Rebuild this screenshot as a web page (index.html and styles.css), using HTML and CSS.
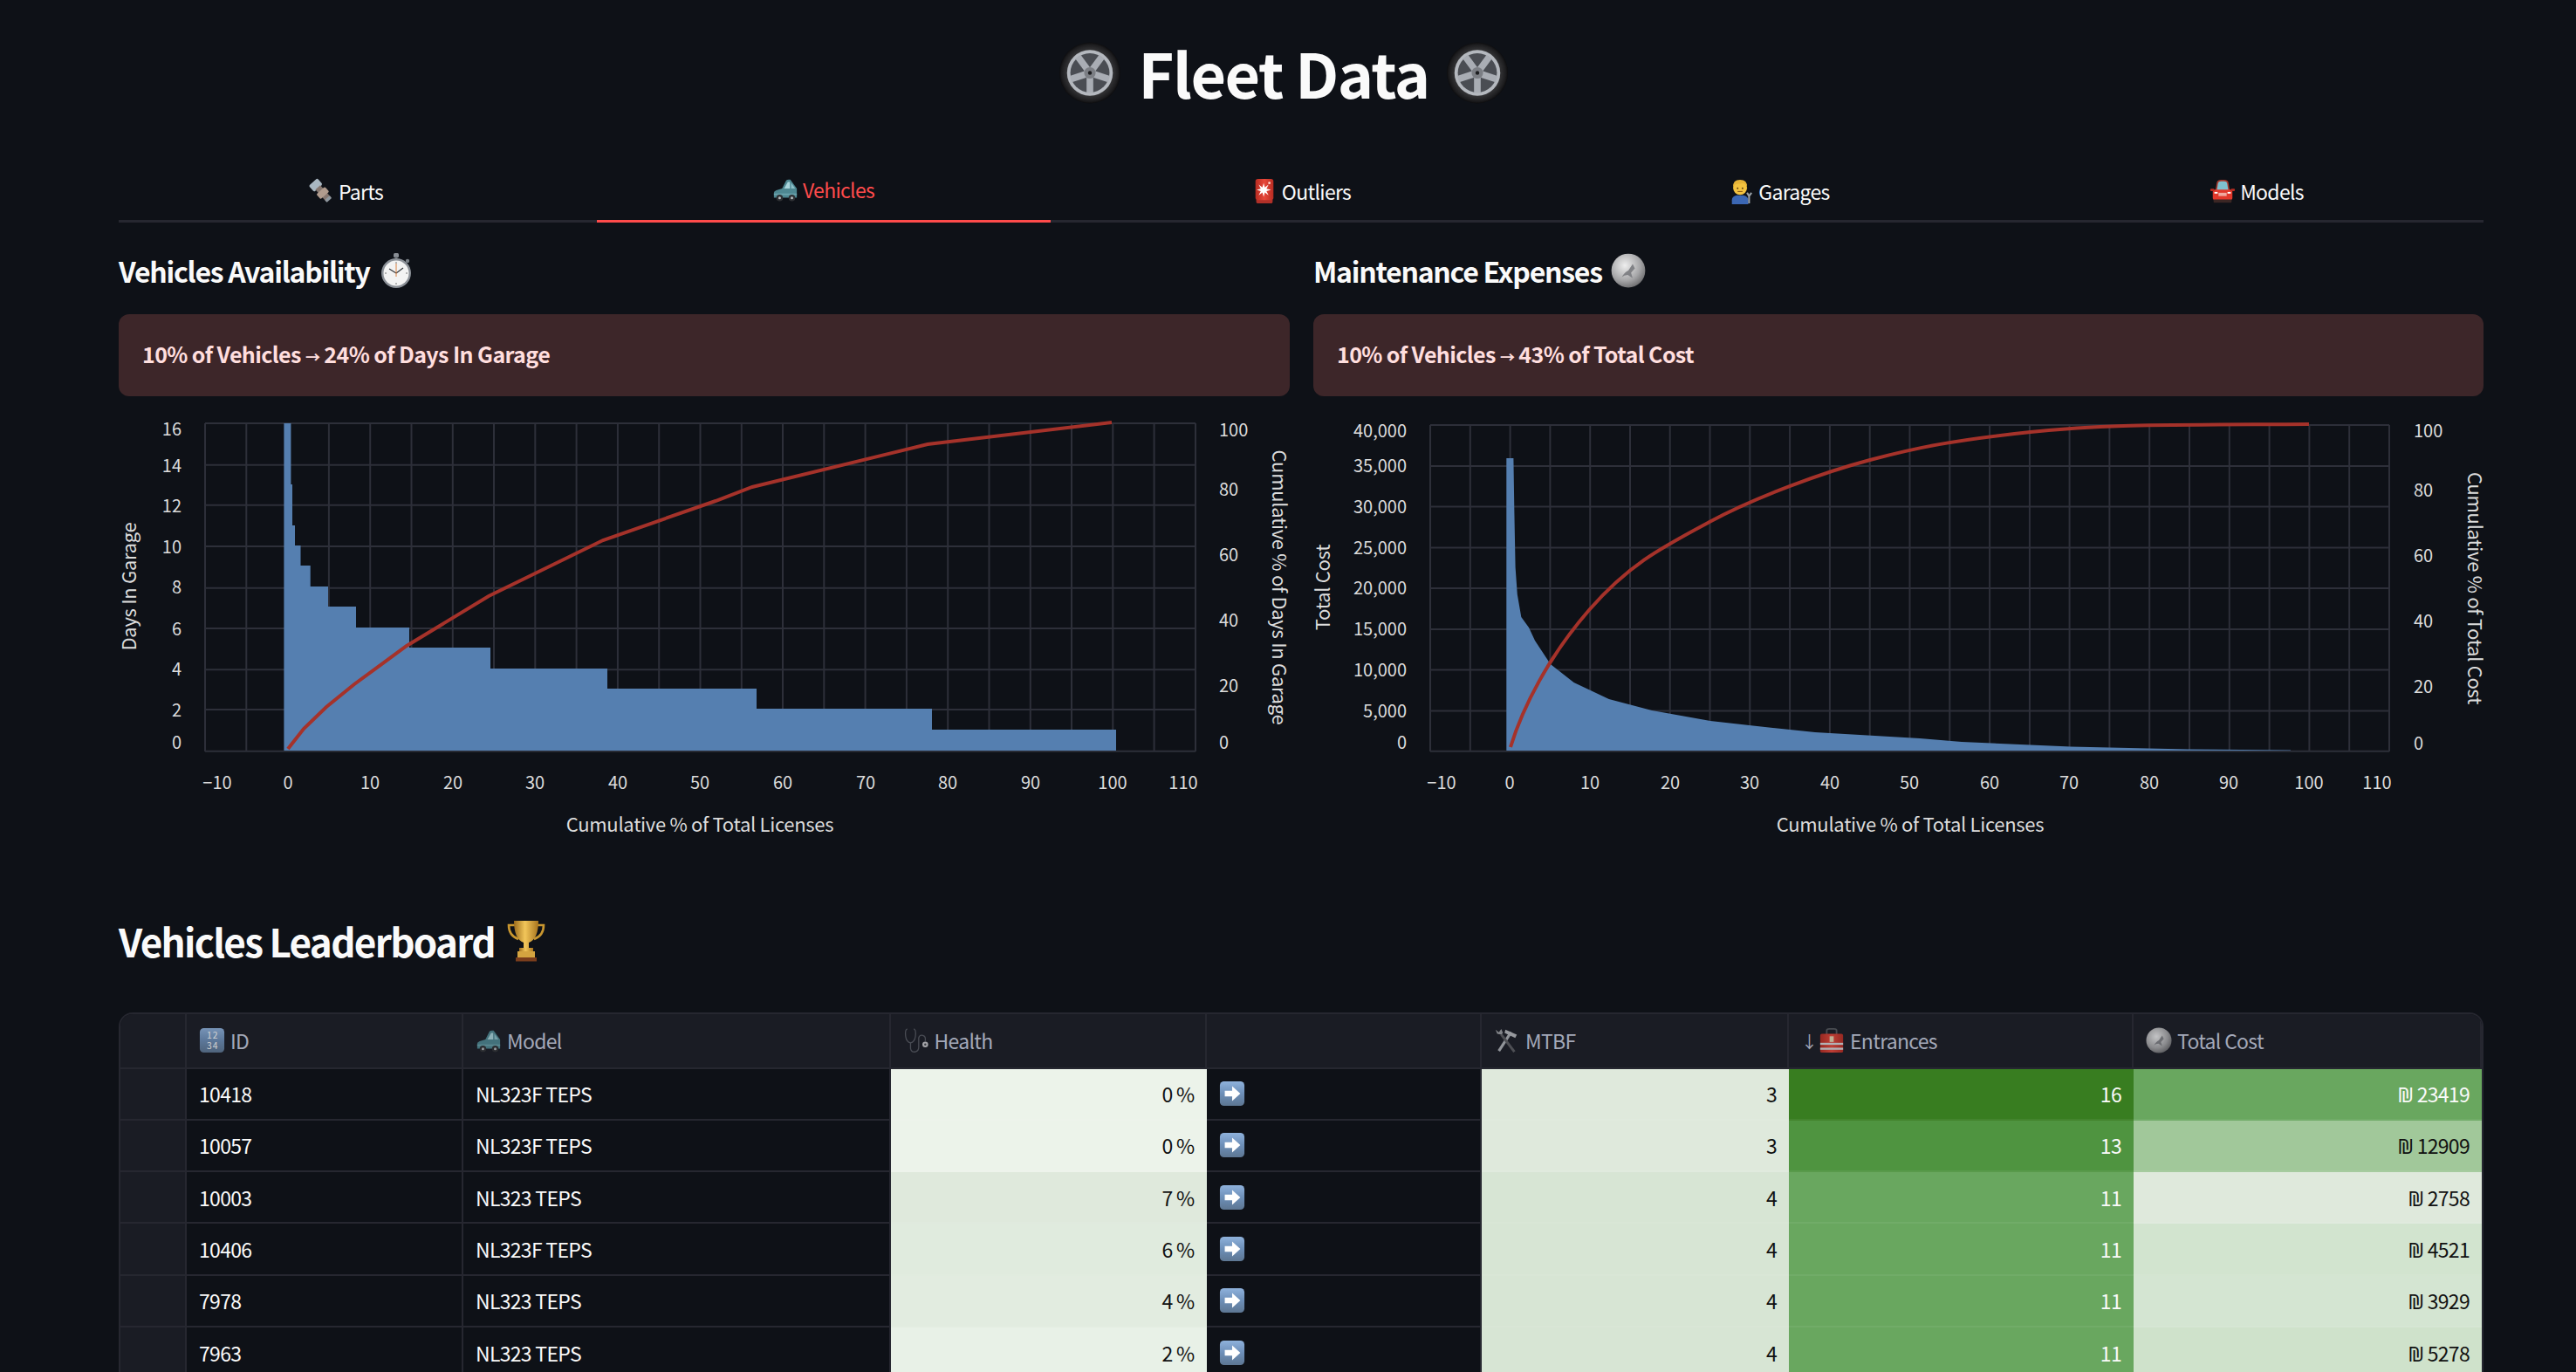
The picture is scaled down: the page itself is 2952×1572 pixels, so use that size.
FILE: index.html
```html
<!DOCTYPE html>
<html lang="en">
<head>
    <meta charset="UTF-8">
    <title>Fleet Data</title>
    <link rel="stylesheet" href="styles.css">
</head>
<body>
    <!-- shared icons -->
    <svg class="icon-defs" xmlns="http://www.w3.org/2000/svg">
        <defs>
            <radialGradient id="g-tire"><stop offset="0.75" stop-color="#333335"/><stop offset="0.93" stop-color="#1c1c1e"/><stop offset="1" stop-color="#0c0c0e"/></radialGradient>
            <radialGradient id="g-coin" cx="0.4" cy="0.35" r="0.75"><stop offset="0" stop-color="#eeeeee"/><stop offset="0.6" stop-color="#a6a6a8"/><stop offset="1" stop-color="#5e5e60"/></radialGradient>
            <linearGradient id="g-gold" x1="0" x2="1" y1="0" y2="0"><stop offset="0" stop-color="#9c6c1c"/><stop offset="0.45" stop-color="#f2c65a"/><stop offset="1" stop-color="#a8741e"/></linearGradient>
            <linearGradient id="g-blue" x1="0" x2="0" y1="0" y2="1"><stop offset="0" stop-color="#8fb2dc"/><stop offset="0.5" stop-color="#6d8fb8"/><stop offset="1" stop-color="#5d7692"/></linearGradient>
            <linearGradient id="g-red" x1="0" x2="1" y1="0" y2="0"><stop offset="0" stop-color="#b62c22"/><stop offset="0.5" stop-color="#e8483a"/><stop offset="1" stop-color="#b62c22"/></linearGradient>
        </defs>
        <symbol id="i-wheel" viewBox="0 0 64 64">
            <circle cx="32" cy="32" r="32" fill="url(#g-tire)"/>
            <circle cx="32" cy="32" r="24" fill="#b4b8be"/>
            <circle cx="32" cy="32" r="20.500" fill="#4a4d53"/>
            <path d="M32 32V53M32 32L52 38.500M32 32L12 38.500M32 32L19.500 15M32 32L44.500 15" stroke="#a9adb4" stroke-width="7"/>
            <circle cx="32" cy="32" r="6" fill="#7b7e84"/>
            <circle cx="32" cy="32" r="2" fill="#1c1d20"/>
        </symbol>
        <symbol id="i-bolt" viewBox="0 0 32 32">
            <g transform="rotate(48 16 16)">
                <rect x="1" y="9" width="10" height="14" rx="2" fill="#a9b7c2"/>
                <rect x="10" y="12" width="20" height="8" fill="#85766f"/>
                <rect x="15" y="9" width="8" height="14" rx="1.500" fill="#b19c8e"/>
                <rect x="27" y="12" width="4" height="8" rx="1" fill="#8e979e"/>
            </g>
        </symbol>
        <symbol id="i-car" viewBox="0 0 32 32">
            <path d="M2 26V20Q2 18 5 17L12 15L17 5Q18 4 20 4H22L30 15V26Z" fill="#4e8791"/>
            <path d="M14.500 15L19 7H21.500V15Z" fill="#a9d5dc"/>
            <path d="M23 15V8L28 15Z" fill="#8cc0c9"/>
            <rect x="2" y="21" width="28" height="2" fill="#6aa3ad"/>
            <circle cx="9" cy="26.500" r="4" fill="#2e3033"/><circle cx="9" cy="26.500" r="1.600" fill="#b6babd"/>
            <circle cx="24" cy="26.500" r="4" fill="#2e3033"/><circle cx="24" cy="26.500" r="1.600" fill="#b6babd"/>
        </symbol>
        <symbol id="i-alarm" viewBox="0 0 32 32">
            <rect x="6" y="25" width="20" height="6" rx="2" fill="#b03028"/>
            <rect x="5" y="1" width="22" height="26" rx="3" fill="url(#g-red)"/>
            <path d="M15 6L16.500 11.500L21 8L18.500 13L24 14.500L18.500 16L21 21L16.500 17.500L15 23L13.500 17.500L9 21L11.500 16L6.500 14.500L11.500 13L9 8L13.500 11.500Z" fill="#fff"/>
            <circle cx="22" cy="6" r="1.500" fill="#ffd8d0"/>
        </symbol>
        <symbol id="i-mechanic" viewBox="0 0 32 32">
            <path d="M5 32V27Q5 22 11 21H19Q25 22 25 27V32Z" fill="#3b67b4"/>
            <circle cx="15" cy="12" r="8.500" fill="#f3c23f"/>
            <path d="M6.500 11Q6 2 15 2Q24 2 23.500 11Q21 5 15 7Q9 6 6.500 11Z" fill="#e7b437"/>
            <circle cx="12" cy="12.500" r="1" fill="#5a3d10"/><circle cx="18" cy="12.500" r="1" fill="#5a3d10"/>
            <path d="M12 16.500H18" stroke="#8d5c14" stroke-width="1.200"/>
            <path d="M26 31V22M26 22L23.500 18M26 22L29 18" stroke="#9aa1a8" stroke-width="2.200" fill="none"/>
        </symbol>
        <symbol id="i-redcar" viewBox="0 0 32 32">
            <path d="M7 16L9 5Q10 2 14 2H18Q22 2 23 5L25 16Z" fill="#a5392e"/>
            <path d="M9 15L10.500 6Q11 4 14 4H18Q21 4 21.500 6L23 15Z" fill="#7fc0cf"/>
            <rect x="4" y="14" width="24" height="13" rx="3" fill="#e2382b"/>
            <rect x="1" y="13" width="5" height="3" rx="1" fill="#b62c22"/><rect x="26" y="13" width="5" height="3" rx="1" fill="#b62c22"/>
            <rect x="11" y="18" width="10" height="4" fill="#f0a89f"/>
            <rect x="6" y="17" width="4" height="2" fill="#fff"/><rect x="22" y="17" width="4" height="2" fill="#fff"/>
            <rect x="5" y="26" width="22" height="4" rx="1" fill="#3b2624"/>
        </symbol>
        <symbol id="i-watch" viewBox="0 0 40 40">
            <rect x="17" y="0" width="6" height="5" rx="1.500" fill="#888d94"/>
            <rect x="18.500" y="4" width="3" height="4" fill="#6d7278"/>
            <circle cx="33" cy="9" r="2.200" fill="#7a8087"/>
            <circle cx="20" cy="23" r="17" fill="#8b9097"/>
            <circle cx="20" cy="23" r="14.500" fill="#f3f3f3"/>
            <path d="M20 23L12 18M20 23L28 17" stroke="#33363a" stroke-width="1.100"/>
            <path d="M20 12V27" stroke="#d9772f" stroke-width="0.900"/>
            <path d="M20 10V12M20 34V36M7 23H9M31 23H33" stroke="#777" stroke-width="1"/>
        </symbol>
        <symbol id="i-coin" viewBox="0 0 32 32">
            <circle cx="16" cy="16" r="15.500" fill="url(#g-coin)"/>
            <path d="M10 22Q13 17 16 16L20 10L22 14L18.500 18L20 23L15.500 20Q12 20 10 22Z" fill="#818286"/>
        </symbol>
        <symbol id="i-trophy" viewBox="0 0 48 48">
            <path d="M11 6H4Q4 18 15 22M37 6H44Q44 18 33 22" fill="none" stroke="#c8962f" stroke-width="2.600"/>
            <path d="M10 1H38Q38 22 27 26V32H21V26Q10 22 10 1Z" fill="url(#g-gold)"/>
            <rect x="16" y="32" width="16" height="4" fill="url(#g-gold)"/>
            <rect x="14" y="36" width="20" height="8" fill="#d4a440"/>
            <rect x="12" y="43" width="24" height="4.500" fill="#7a3d1c"/>
        </symbol>
        <symbol id="i-stethoscope" viewBox="0 0 32 32">
            <path d="M5 2Q2 3 3 11Q4 18 9 19Q14 18 15 11Q16 3 13 2" fill="none" stroke="#555860" stroke-width="1.400"/>
            <path d="M9 19V26Q10 31 15 30Q19 29 19 24V13Q20 9 24 10Q28 11 27 17" fill="none" stroke="#555860" stroke-width="1.400"/>
            <circle cx="27" cy="21" r="3.500" fill="#c9c9cc"/><circle cx="27" cy="21" r="1.300" fill="#44464c"/>
        </symbol>
        <symbol id="i-tools" viewBox="0 0 32 32">
            <path d="M6 29L21 6" stroke="#aeb1b6" stroke-width="3.400"/>
            <path d="M14 3L28 9L26 13L13 7Z" fill="#b7b9bd"/>
            <path d="M25 30L9 9" stroke="#5b5c60" stroke-width="3.200"/>
            <path d="M9 9L4 8L2 3L6 6L9 2L11 7Z" fill="#9b9da1"/>
        </symbol>
        <symbol id="i-toolbox" viewBox="0 0 32 32">
            <path d="M10 9V4Q10 2 13 2H19Q22 2 22 4V9" fill="none" stroke="#55585d" stroke-width="2"/>
            <rect x="2" y="8" width="28" height="23" rx="2" fill="url(#g-red)"/>
            <rect x="2" y="19" width="28" height="2.500" fill="#d8d8da"/>
            <rect x="2" y="25" width="28" height="2.500" fill="#d8d8da"/>
            <rect x="13.500" y="11" width="5" height="7" fill="#e8d4b0"/>
        </symbol>
        <symbol id="i-arrow" viewBox="0 0 32 32">
            <rect x="1" y="1" width="30" height="30" rx="5" fill="url(#g-blue)"/>
            <path d="M7 12.500H16V7L26 16L16 25V19.500H7Z" fill="#fff"/>
        </symbol>
    </svg>

    <div class="container">
        <div class="title-row">
            <svg class="title-icon"><use href="#i-wheel"/></svg>
            <h1>Fleet Data</h1>
            <svg class="title-icon"><use href="#i-wheel"/></svg>
        </div>

        <!-- tabs -->
        <div class="tabs">
            <div class="tab"><svg class="tab-icon"><use href="#i-bolt"/></svg>Parts</div>
            <div class="tab active"><svg class="tab-icon"><use href="#i-car"/></svg>Vehicles</div>
            <div class="tab"><svg class="tab-icon"><use href="#i-alarm"/></svg>Outliers</div>
            <div class="tab"><svg class="tab-icon"><use href="#i-mechanic"/></svg>Garages</div>
            <div class="tab"><svg class="tab-icon"><use href="#i-redcar"/></svg>Models</div>
        </div>

        <div class="columns">
            <div class="column">
                <h3>Vehicles Availability <svg class="h3-icon"><use href="#i-watch"/></svg></h3>
                <div class="alert">10% of Vehicles <span class="alert-arrow">→</span> 24% of Days In Garage</div>
                <svg class="chart" viewBox="136 470 1342 500">
                    <path class="grid" d="M235 485V861M282.300 485V861M329.600 485V861M376.900 485V861M424.200 485V861M471.500 485V861M518.800 485V861M566 485V861M613.300 485V861M660.600 485V861M707.900 485V861M755.200 485V861M802.500 485V861M849.800 485V861M897 485V861M944.300 485V861M991.600 485V861M1038.900 485V861M1086.200 485V861M1133.500 485V861M1180.800 485V861M1228 485V861M1275.300 485V861M1322.600 485V861M1370 485V861"/>
                    <path class="grid" d="M235 485H1370M235 532.700H1370M235 578.700H1370M235 626H1370M235 673.700H1370M235 720H1370M235 767.300H1370M235 813H1370M235 860.700H1370"/>
                    <path class="bars" d="M325.400 860V485H333.400V555H335V602H338V625H344.500V648H355.700V672H376V695H408V719H469V742H562V766H696V789H867V812H1068V836H1279V860Z"/>
                    <path class="trend" d="M330 858L348 835L374 810L406 784L466 740L560 683L691 619L820 574L862 558L1063 509L1274 484"/>

                    <g class="tick-left">
                        <text x="208" y="499">16</text><text x="208" y="541">14</text><text x="208" y="587">12</text><text x="208" y="634">10</text>
                        <text x="208" y="680">8</text><text x="208" y="728">6</text><text x="208" y="774">4</text><text x="208" y="821">2</text><text x="208" y="858">0</text>
                    </g>
                    <g class="tick-right">
                        <text x="1397" y="500">100</text><text x="1397" y="568">80</text><text x="1397" y="643">60</text><text x="1397" y="718">40</text><text x="1397" y="793">20</text><text x="1397" y="858">0</text>
                    </g>
                    <g class="tick-bottom">
                        <text x="249" y="904">−10</text><text x="330" y="904">0</text><text x="424" y="904">10</text><text x="519" y="904">20</text><text x="613" y="904">30</text><text x="708" y="904">40</text>
                        <text x="802" y="904">50</text><text x="897" y="904">60</text><text x="992" y="904">70</text><text x="1086" y="904">80</text><text x="1181" y="904">90</text><text x="1275" y="904">100</text><text x="1356" y="904">110</text>
                    </g>
                    <text class="axis-title" x="802" y="953">Cumulative % of Total Licenses</text>
                    <text class="axis-title" transform="rotate(-90 156 672)" x="156" y="672">Days In Garage</text>
                    <text class="axis-title" transform="rotate(90 1458 673)" x="1458" y="673">Cumulative % of Days In Garage</text>
                </svg>
            </div>

            <div class="column">
                <h3>Maintenance Expenses <svg class="h3-icon"><use href="#i-coin"/></svg></h3>
                <div class="alert">10% of Vehicles <span class="alert-arrow">→</span> 43% of Total Cost</div>
                <svg class="chart" viewBox="1505 470 1341 500">
                    <path class="grid" d="M1639 487V861M1684.800 487V861M1730.600 487V861M1776.400 487V861M1822.200 487V861M1868 487V861M1913.700 487V861M1959.500 487V861M2005.300 487V861M2051.100 487V861M2096.900 487V861M2142.700 487V861M2188.500 487V861M2234.300 487V861M2280.100 487V861M2325.900 487V861M2371.600 487V861M2417.400 487V861M2463.200 487V861M2509 487V861M2554.800 487V861M2600.600 487V861M2646.400 487V861M2692.200 487V861M2738 487V861"/>
                    <path class="grid" d="M1639 487H2738M1639 534H2738M1639 580.600H2738M1639 627.600H2738M1639 674H2738M1639 721H2738M1639 767.500H2738M1639 814.600H2738M1639 860.700H2738"/>
                    <path class="bars" d="M1726.300 860V525H1734.400L1735.300 582L1736.600 650L1738.800 681L1743.300 707L1752 719L1759 734L1776.800 761L1803.600 782L1843.800 801L1893 814L1960 826L2004.500 831L2080 839L2200 846L2248 850L2373 855.500L2507 858.500L2625 859.500V860Z"/>
                    <path class="trend" d="M1731 856C1745 810 1775 752 1821 699S1905 627 1959 598S2090 541 2143 527S2240 504 2327 495S2460 487 2646 486"/>

                    <g class="tick-left">
                        <text x="1612" y="501">40,000</text><text x="1612" y="541">35,000</text><text x="1612" y="588">30,000</text><text x="1612" y="635">25,000</text><text x="1612" y="681">20,000</text>
                        <text x="1612" y="728">15,000</text><text x="1612" y="775">10,000</text><text x="1612" y="822">5,000</text><text x="1612" y="858">0</text>
                    </g>
                    <g class="tick-right">
                        <text x="2766" y="501">100</text><text x="2766" y="569">80</text><text x="2766" y="644">60</text><text x="2766" y="719">40</text><text x="2766" y="794">20</text><text x="2766" y="859">0</text>
                    </g>
                    <g class="tick-bottom">
                        <text x="1652" y="904">−10</text><text x="1730" y="904">0</text><text x="1822" y="904">10</text><text x="1914" y="904">20</text><text x="2005" y="904">30</text><text x="2097" y="904">40</text>
                        <text x="2188" y="904">50</text><text x="2280" y="904">60</text><text x="2371" y="904">70</text><text x="2463" y="904">80</text><text x="2554" y="904">90</text><text x="2646" y="904">100</text><text x="2724" y="904">110</text>
                    </g>
                    <text class="axis-title" x="2189" y="953">Cumulative % of Total Licenses</text>
                    <text class="axis-title" transform="rotate(-90 1524 673)" x="1524" y="673">Total Cost</text>
                    <text class="axis-title" transform="rotate(90 2828 674)" x="2828" y="674">Cumulative % of Total Cost</text>
                </svg>
            </div>
        </div>

        <h2>Vehicles Leaderboard <svg class="h2-icon"><use href="#i-trophy"/></svg></h2>

        <!-- leaderboard table -->
        <div class="table">
            <div class="th"></div>
            <div class="th">
                <svg class="th-icon" viewBox="0 0 32 32">
                    <rect x="1" y="1" width="30" height="30" rx="5" fill="url(#g-blue)"/>
                    <text class="icon-digits" x="16" y="14" text-anchor="middle">1 2</text>
                    <text class="icon-digits" x="16" y="27" text-anchor="middle">3 4</text>
                </svg>ID
            </div>
            <div class="th"><svg class="th-icon"><use href="#i-car"/></svg>Model</div>
            <div class="th"><svg class="th-icon"><use href="#i-stethoscope"/></svg>Health</div>
            <div class="th"></div>
            <div class="th"><svg class="th-icon"><use href="#i-tools"/></svg>MTBF</div>
            <div class="th"><span class="sort">↓</span><svg class="th-icon"><use href="#i-toolbox"/></svg>Entrances</div>
            <div class="th"><svg class="th-icon"><use href="#i-coin"/></svg>Total Cost</div>

            <div class="td idx"></div><div class="td">10418</div><div class="td">NL323F TEPS</div><div class="td num h0">0 %</div><div class="td"><svg class="row-icon"><use href="#i-arrow"/></svg></div><div class="td num m3">3</div><div class="td num e16">16</div><div class="td num c1">₪ 23419</div>
            <div class="td idx"></div><div class="td">10057</div><div class="td">NL323F TEPS</div><div class="td num h0">0 %</div><div class="td"><svg class="row-icon"><use href="#i-arrow"/></svg></div><div class="td num m3">3</div><div class="td num e13">13</div><div class="td num c2">₪ 12909</div>
            <div class="td idx"></div><div class="td">10003</div><div class="td">NL323 TEPS</div><div class="td num h7">7 %</div><div class="td"><svg class="row-icon"><use href="#i-arrow"/></svg></div><div class="td num m4">4</div><div class="td num e11">11</div><div class="td num c3">₪ 2758</div>
            <div class="td idx"></div><div class="td">10406</div><div class="td">NL323F TEPS</div><div class="td num h6">6 %</div><div class="td"><svg class="row-icon"><use href="#i-arrow"/></svg></div><div class="td num m4">4</div><div class="td num e11">11</div><div class="td num c4">₪ 4521</div>
            <div class="td idx"></div><div class="td">7978</div><div class="td">NL323 TEPS</div><div class="td num h4">4 %</div><div class="td"><svg class="row-icon"><use href="#i-arrow"/></svg></div><div class="td num m4">4</div><div class="td num e11">11</div><div class="td num c5">₪ 3929</div>
            <div class="td idx"></div><div class="td">7963</div><div class="td">NL323 TEPS</div><div class="td num h2">2 %</div><div class="td"><svg class="row-icon"><use href="#i-arrow"/></svg></div><div class="td num m4">4</div><div class="td num e11">11</div><div class="td num c6">₪ 5278</div>
        </div>
    </div>
</body>
</html>
```

FILE: styles.css
```css
/* base */
html, body {
    margin: 0;
    height: 1572px;
    overflow: hidden;
}
body {
    background-color: #0e1117;
    color: #fafafa;
    font-family: "Noto Sans CJK SC", "Noto Sans", sans-serif;
}
.icon-defs {
    display: block;
    width: 0;
    height: 0;
}
.icon-digits {
    fill: #fff;
    font-size: 11px;
    font-family: "Noto Sans CJK SC", sans-serif;
}
.container {
    padding: 0 106px 0 136px;
}

/* title */
.title-row {
    display: flex;
    justify-content: center;
    align-items: center;
    gap: 20px;
    height: 172px;
    padding: 0 40px 6px 0;
    box-sizing: border-box;
}
.title-row h1 {
    margin: 0;
    font-size: 70px;
    line-height: 1;
    font-weight: 700;
    letter-spacing: -1.500px;
}
.title-icon {
    width: 70px;
    height: 71px;
}

/* tabs */
.tabs {
    display: grid;
    grid-template-columns: repeat(5, 1fr);
    column-gap: 27.5px;
    border-bottom: 3px solid #262730;
    height: 80px;
}
.tab {
    display: flex;
    justify-content: center;
    align-items: center;
    gap: 5px;
    height: 83px;
    padding-top: 10px;
    box-sizing: border-box;
    font-size: 23px;
    letter-spacing: -0.700px;
}
.tab.active {
    color: #ff4b4b;
    border-bottom: 3px solid #ff4b4b;
}
.tab-icon {
    width: 30px;
    height: 30px;
}

/* two chart columns */
.columns {
    display: grid;
    grid-template-columns: 1342px 1341px;
    column-gap: 27px;
    padding-top: 31px;
}
.column h3 {
    display: flex;
    align-items: center;
    gap: 10px;
    margin: 0;
    height: 48px;
    font-size: 32px;
    line-height: 48px;
    font-weight: 600;
    letter-spacing: -1.250px;
}
.h3-icon {
    width: 40px;
    height: 40px;
}
.alert {
    box-sizing: border-box;
    height: 94px;
    margin-top: 26px;
    padding: 0 27px;
    border-radius: 12px;
    background-color: #3d2629;
    color: #ffdede;
    font-size: 25px;
    line-height: 90px;
    font-weight: 600;
    letter-spacing: -0.600px;
}
.alert-arrow {
    font-size: 17px;
}
.chart {
    display: block;
    width: 100%;
    height: 500px;
    margin-top: 16px;
}

/* chart parts */
.grid {
    fill: none;
    stroke: #2d2f39;
    stroke-width: 2;
}
.bars {
    fill: #557fb0;
}
.trend {
    fill: none;
    stroke: #a5322a;
    stroke-width: 4;
}
.chart text {
    fill: #dcdcdc;
    font-size: 20px;
}
.tick-left {
    text-anchor: end;
}
.tick-right {
    text-anchor: start;
}
.tick-bottom {
    text-anchor: middle;
}
.chart .axis-title {
    font-size: 22px;
    letter-spacing: -0.300px;
    text-anchor: middle;
}

/* leaderboard */
h2 {
    display: flex;
    align-items: center;
    gap: 12px;
    margin: 78px 0 0;
    height: 60px;
    font-size: 44px;
    line-height: 60px;
    font-weight: 600;
    letter-spacing: -1.700px;
}
.h2-icon {
    width: 48px;
    height: 48px;
}
.table {
    display: grid;
    grid-template-columns: 76px 317px 489.500px 362px 315.500px 352px 395px 1fr;
    grid-template-rows: 62.500px;
    grid-auto-rows: 59.330px;
    margin-top: 52px;
    border: 2px solid #262730;
    border-bottom: 0;
    border-radius: 16px 16px 0 0;
    overflow: hidden;
    font-size: 23px;
    letter-spacing: -0.700px;
}
.th, .td {
    display: flex;
    align-items: center;
    padding: 0 14px;
    box-sizing: border-box;
    border-right: 2px solid #262730;
    border-bottom: 2px solid #262730;
}
.th {
    gap: 6px;
    background-color: #1a1c24;
    color: #a3a8b8;
}
.th:last-of-type {
    border-right: 0;
}
.th-icon {
    width: 30px;
    height: 30px;
    opacity: 0.8;
}
.sort {
    width: 14px;
    font-size: 19px;
}
.row-icon {
    width: 30px;
    height: 30px;
}
.td.idx {
    background-color: #1a1c24;
}
.td.num {
    justify-content: flex-end;
    color: #111;
    border-right: 0;
    border-bottom-color: rgba(255, 255, 255, 0.06);
}

/* heat colours */
.h0 { background-color: #ecf3ea; }
.h7 { background-color: #dfe9dc; }
.h6 { background-color: #e0ebde; }
.h4 { background-color: #e2ece0; }
.h2 { background-color: #e8f1e7; }
.m3 { background-color: #dfe9dc; }
.m4 { background-color: #d7e5d4; }
.td.e16 { background-color: #387d20; color: #fafafa; }
.td.e13 { background-color: #4f9440; color: #fafafa; }
.td.e11 { background-color: #69a75f; color: #fafafa; }
.td.c1 { background-color: #69a75f; color: #fafafa; }
.c2 { background-color: #a1c89a; }
.c3 { background-color: #dfe9dc; }
.c4 { background-color: #d2e4cf; }
.c5 { background-color: #d4e5d2; }
.c6 { background-color: #cfe2cb; }
```
